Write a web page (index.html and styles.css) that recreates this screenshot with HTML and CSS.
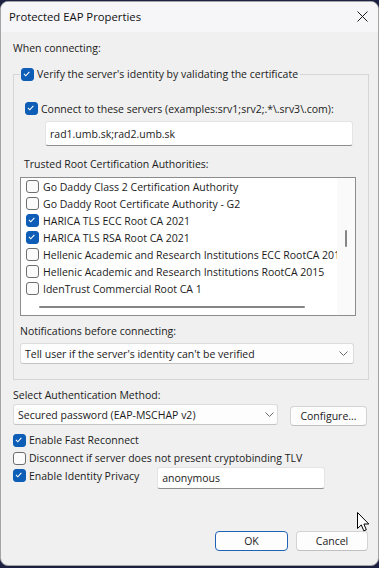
FILE: index.html
```html
<!DOCTYPE html>
<html>
<head>
<meta charset="utf-8">
<link rel="stylesheet" href="styles.css">
</head>
<body>
<div class="desk">
  <div class="win">
    <div class="titlebar">
      <span class="title">Protected EAP Properties</span>
      <svg class="close" width="11" height="11" viewBox="0 0 11 11"><path d="M0.5 0.5 L10.5 10.5 M10.5 0.5 L0.5 10.5" stroke="#1b1b1b" stroke-width="1" fill="none"/></svg>
    </div>
    <div class="content">
      <div class="label when">When connecting:</div>
      <fieldset class="group">
        <legend class="legend"><span class="cb on"><svg viewBox="0 0 13 13"><polyline points="3.3,6.8 5.5,9 9.7,4.3" /></svg></span><span>Verify the server's identity by validating the certificate</span></legend>
        <div class="row connect"><span class="cb on"><svg viewBox="0 0 13 13"><polyline points="3.3,6.8 5.5,9 9.7,4.3" /></svg></span><span>Connect to these servers (examples:srv1;srv2;.*\.srv3\.com):</span></div>
        <div class="textbox servers">rad1.umb.sk;rad2.umb.sk</div>
        <div class="label trusted">Trusted Root Certification Authorities:</div>
        <div class="list">
          <div class="items">
            <div class="item"><span class="cb"></span><span>Go Daddy Class 2 Certification Authority</span></div>
            <div class="item"><span class="cb"></span><span>Go Daddy Root Certificate Authority - G2</span></div>
            <div class="item"><span class="cb on"><svg viewBox="0 0 13 13"><polyline points="3.3,6.8 5.5,9 9.7,4.3" /></svg></span><span>HARICA TLS ECC Root CA 2021</span></div>
            <div class="item"><span class="cb on"><svg viewBox="0 0 13 13"><polyline points="3.3,6.8 5.5,9 9.7,4.3" /></svg></span><span>HARICA TLS RSA Root CA 2021</span></div>
            <div class="item"><span class="cb"></span><span>Hellenic Academic and Research Institutions ECC RootCA 2015</span></div>
            <div class="item"><span class="cb"></span><span>Hellenic Academic and Research Institutions RootCA 2015</span></div>
            <div class="item"><span class="cb"></span><span>IdenTrust Commercial Root CA 1</span></div>
          </div>
          <div class="vscroll"><span class="vthumb"></span></div>
          <div class="hscroll"><span class="hthumb"></span></div>
          <div class="corner"></div>
        </div>
        <div class="label notif">Notifications before connecting:</div>
        <div class="select notif-select"><span>Tell user if the server's identity can't be verified</span><svg class="chev" width="9" height="5" viewBox="0 0 9 5"><polyline points="0.5,0.5 4.5,4.5 8.5,0.5"/></svg></div>
      </fieldset>
      <div class="label auth">Select Authentication Method:</div>
      <div class="auth-row">
        <div class="select auth-select"><span>Secured password (EAP-MSCHAP v2)</span><svg class="chev" width="9" height="5" viewBox="0 0 9 5"><polyline points="0.5,0.5 4.5,4.5 8.5,0.5"/></svg></div>
        <div class="btn configure">Configure...</div>
      </div>
      <div class="checks">
        <div class="row opt"><span class="cb on"><svg viewBox="0 0 13 13"><polyline points="3.3,6.8 5.5,9 9.7,4.3" /></svg></span><span>Enable Fast Reconnect</span></div>
        <div class="row opt"><span class="cb"></span><span>Disconnect if server does not present cryptobinding TLV</span></div>
        <div class="row opt ident">
          <div class="row"><span class="cb on"><svg viewBox="0 0 13 13"><polyline points="3.3,6.8 5.5,9 9.7,4.3" /></svg></span><span>Enable Identity Privacy</span></div>
          <div class="textbox anon">anonymous</div>
        </div>
      </div>
      <div class="footer">
        <div class="btn ok">OK</div>
        <div class="btn cancel">Cancel</div>
      </div>
    </div>
  </div>
  <svg class="cursor" width="13" height="20" viewBox="0 0 13 20"><path d="M0.5 0.5 L0.5 16.5 L4.3 12.9 L6.8 18.8 L9.3 17.8 L6.9 12 L11.8 12 Z" fill="#ffffff" stroke="#000000" stroke-width="1" stroke-linejoin="round"/></svg>
</div>
</body>
</html>
```
FILE: styles.css
```css
* { box-sizing: border-box; }
html, body { margin: 0; padding: 0; }
body {
  background: #1d2242;
  width: 379px;
  height: 568px;
  overflow: hidden;
  font-family: "Open Sans", "Noto Sans", sans-serif;
  font-size: 10.5px;
  color: #1b1b1b;
}
.desk { position: relative; height: 568px; padding-top: 1px; }
.win {
  height: 565px;
  background: #f0f0f0;
  border: 1px solid #a4a4a4;
  border-radius: 8px;
  overflow: hidden;
}
.titlebar {
  height: 30px;
  background: #f6f6f9;
  display: flex;
  align-items: center;
  justify-content: space-between;
  padding: 0 10px 2px 8px;
}
.title { font-size: 11.3px; color: #111; }
.close { display: block; }
.content { padding: 9px 10px 0 12px; }
.label { line-height: 15px; height: 15px; white-space: nowrap; }
.group {
  margin: 11px 0 0 0;
  width: 356px;
  border: 1px solid #d6d6d6;
  padding: 0 0 15px 0;
  min-width: 0;
}
.legend {
  margin-left: 6px;
  padding: 0 2px 0 1px;
  display: flex;
  align-items: center;
  height: 15px;
  line-height: 15px;
}
.cb {
  width: 13px;
  height: 13px;
  border: 1px solid #6e6e6e;
  border-radius: 3px;
  background: #fbfbfb;
  flex: none;
  display: inline-block;
}
.cb svg { display: block; width: 11px; height: 11px; margin: 0; }
.cb.on { background: #0e5db6; border-color: #0e5db6; }
.cb polyline { fill: none; stroke: #fff; stroke-width: 1.3; transform: translate(-1px, -1px); }
.legend .cb { margin-right: 3px; }
.row { display: flex; align-items: center; white-space: nowrap; }
.connect { margin: 19px 0 0 11px; height: 15px; }
.connect .cb { margin-right: 3px; }
.textbox {
  background: #fff;
  border: 1px solid #e4e4e4;
  border-bottom-color: #8e8e8e;
  border-radius: 3px;
  display: flex;
  align-items: center;
  padding-left: 4px;
}
.servers { margin: 5px 0 0 31px; width: 308px; height: 25px; }
.trusted { margin: 11px 0 0 10px; }
.list {
  margin: 5px 0 0 6px;
  width: 336px;
  height: 139px;
  border: 1px solid #8c8c8c;
  background: #fff;
  display: grid;
  grid-template-columns: 316px 18px;
  grid-template-rows: 119px 18px;
}
.items { overflow: hidden; }
.item { display: flex; align-items: center; height: 17px; white-space: nowrap; padding-left: 5px; }
.item .cb { margin-right: 4px; }
.vscroll { background: #fafafa; padding: 52px 0 0 8px; }
.vthumb { display: block; width: 2px; height: 17px; background: #858585; border-radius: 1px; }
.hscroll { padding: 9px 0 0 18px; }
.hthumb { display: block; width: 266px; height: 2px; background: #858585; border-radius: 1px; }
.corner { background: #fafafa; }
.notif { margin: 8px 0 0 6px; }
.select {
  background: #fdfdfd;
  border: 1px solid #dcdcdc;
  border-bottom-color: #c4c4c4;
  border-radius: 3px;
  display: flex;
  align-items: center;
  justify-content: space-between;
  padding: 0 5px 0 4px;
  white-space: nowrap;
}
.chev polyline { fill: none; stroke: #6a6a6a; stroke-width: 1; }
.notif-select { margin: 4px 0 0 6px; width: 334px; height: 21px; }
.auth { margin-top: 8px; }
.auth-row { display: flex; align-items: flex-start; margin-top: 1px; }
.auth-select { width: 265px; height: 21px; padding-right: 3px; }
.btn {
  background: #fdfdfd;
  border: 1px solid #d3d3d3;
  border-bottom-color: #c0c0c0;
  border-radius: 4px;
  display: flex;
  align-items: center;
  justify-content: center;
  white-space: nowrap;
}
.configure { width: 77px; height: 20px; margin: 2px 0 0 12px; }
.checks { margin-top: 5px; display: flex; flex-direction: column; }
.opt { height: 18px; }
.opt .cb { margin-right: 3px; }
.ident { align-items: flex-start; height: auto; }
.ident > .row { height: 17px; }
.anon { width: 168px; height: 22px; margin: 0 0 0 18px; }
.footer { display: flex; justify-content: flex-end; gap: 8px; margin-top: 42px; }
.ok { width: 73px; height: 20px; border-color: #1f63b5; }
.cancel { width: 72px; height: 20px; }
.cursor { position: absolute; left: 357px; top: 512px; }
```
